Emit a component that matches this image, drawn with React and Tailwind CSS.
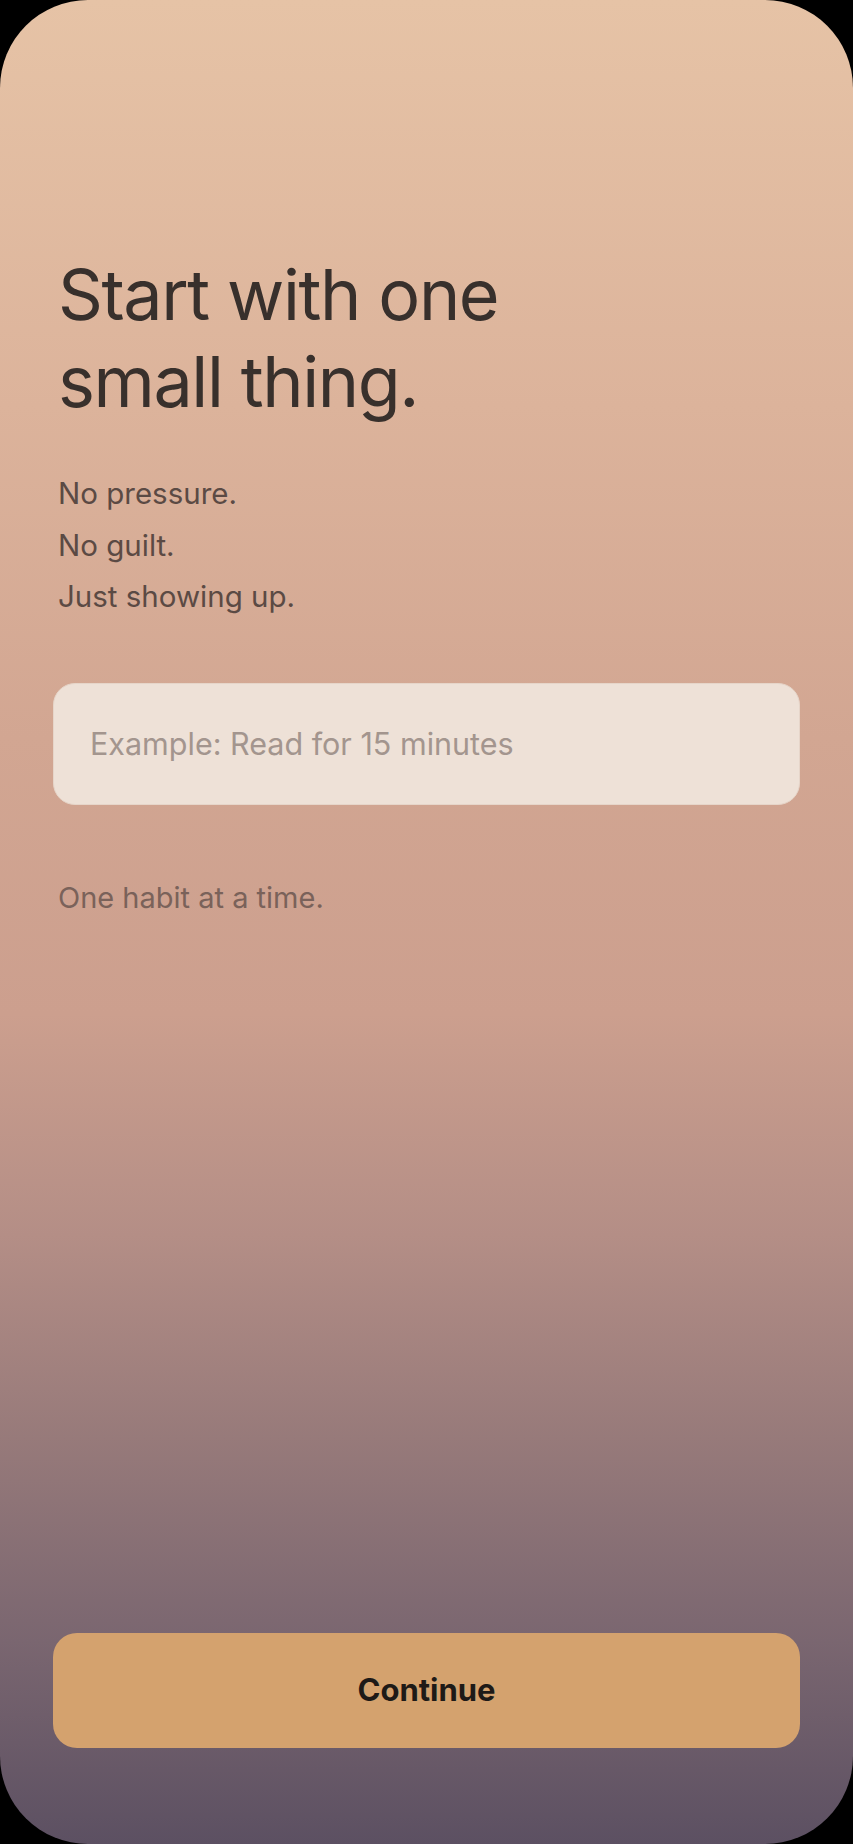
import React, { useState } from 'react';

// Onboarding step: pick a first habit
const App = () => {
    const [habit, setHabit] = useState('');

    return (
        <div className="w-[853px] h-[1844px] bg-black font-['Inter','Noto_Sans',sans-serif]">
            <div className="h-full rounded-[88px] bg-[linear-gradient(to_bottom,#e6c3a6_0%,#dcb39b_22%,#d2a692_40%,#cc9f8e_55%,#b48e86_67%,#977a7a_78%,#7a6670_89%,#5c5062_100%)] flex flex-col px-[53px] pt-[251px] pb-[96px]">
                <h1 className="pl-[5px] text-[70px] leading-[87px] tracking-[-0.02em] font-normal text-[#38302c]">
                    Start with one<br />small thing.
                </h1>

                <div className="pl-[5px] mt-[43px] text-[29.5px] leading-[51.5px] text-[#5b4a44]">
                    <p>No pressure.</p>
                    <p>No guilt.</p>
                    <p>Just showing up.</p>
                </div>

                <input
                    type="text"
                    value={habit}
                    onChange={(e) => setHabit(e.target.value)}
                    placeholder="Example: Read for 15 minutes"
                    className="mt-[60px] h-[122px] w-full rounded-[22px] border border-[#e6d5c9] bg-[#eee1d7] px-[36px] text-[30.5px] text-[#4a3d38] placeholder:text-[#a3958e] outline-none"
                />

                <p className="pl-[5px] mt-[75px] text-[29px] leading-[36px] text-[#7a625a]">One habit at a time.</p>

                <button className="mt-auto h-[115px] w-full rounded-[24px] bg-[#d4a26e] text-[31px] font-bold text-[#1e1a17]">
                    Continue
                </button>
            </div>
        </div>
    );
};

export default App;
